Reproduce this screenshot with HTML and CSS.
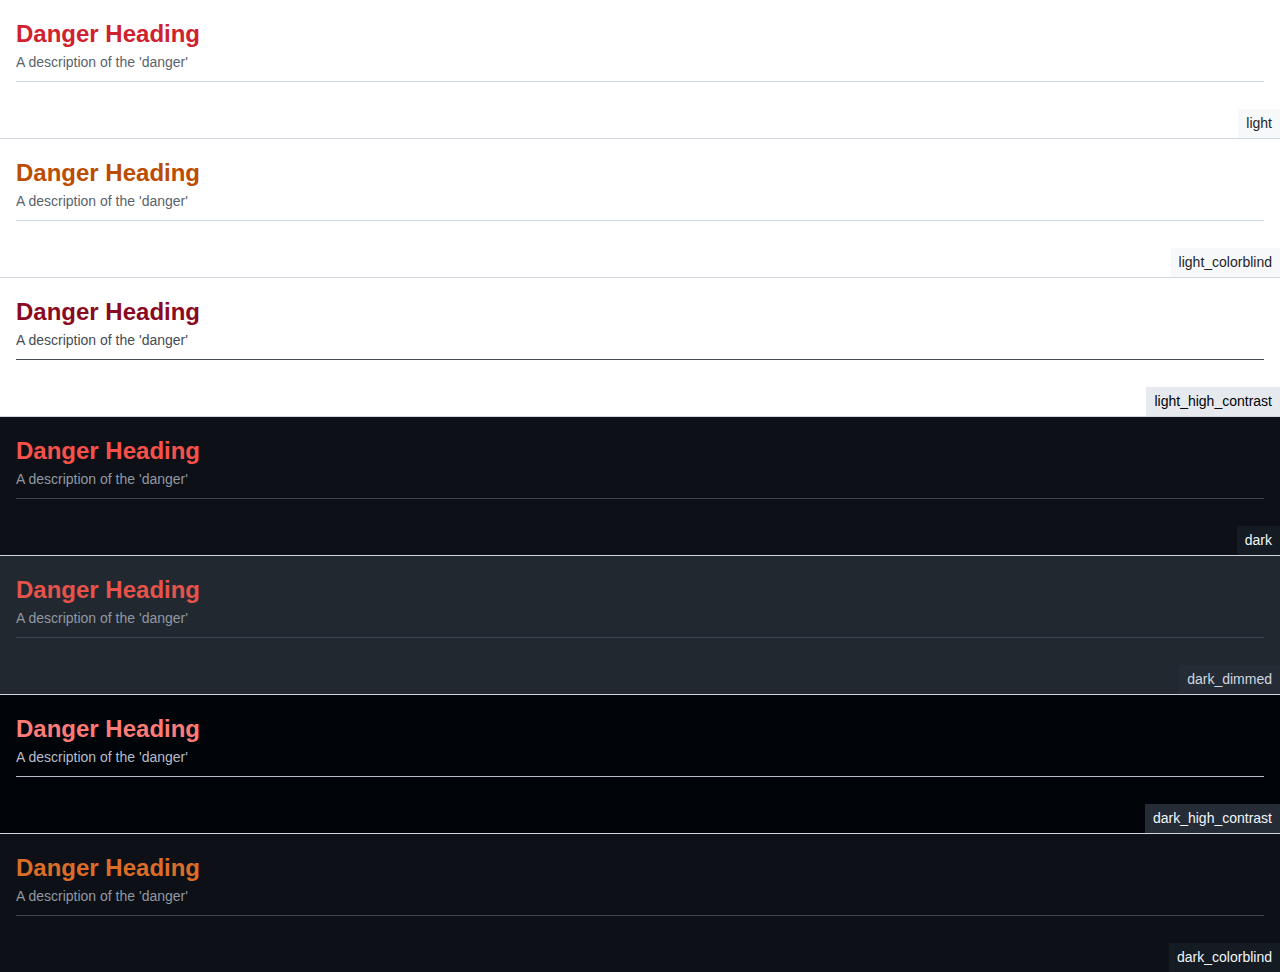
FILE: index.html
```html
<!DOCTYPE html>
<html lang="en">
<head>
<meta charset="utf-8">
<title>Subhead danger</title>
<link rel="stylesheet" href="styles.css">
</head>
<body>
<div class="theme t-light">
  <div class="subhead"><h2 class="subhead-heading">Danger Heading</h2><div class="subhead-desc">A description of the 'danger'</div></div>
  <span class="label">light</span>
</div>
<div class="theme t-light-cb">
  <div class="subhead"><h2 class="subhead-heading">Danger Heading</h2><div class="subhead-desc">A description of the 'danger'</div></div>
  <span class="label">light_colorblind</span>
</div>
<div class="theme t-light-hc">
  <div class="subhead"><h2 class="subhead-heading">Danger Heading</h2><div class="subhead-desc">A description of the 'danger'</div></div>
  <span class="label">light_high_contrast</span>
</div>
<div class="theme t-dark">
  <div class="subhead"><h2 class="subhead-heading">Danger Heading</h2><div class="subhead-desc">A description of the 'danger'</div></div>
  <span class="label">dark</span>
</div>
<div class="theme t-dark-dimmed">
  <div class="subhead"><h2 class="subhead-heading">Danger Heading</h2><div class="subhead-desc">A description of the 'danger'</div></div>
  <span class="label">dark_dimmed</span>
</div>
<div class="theme t-dark-hc">
  <div class="subhead"><h2 class="subhead-heading">Danger Heading</h2><div class="subhead-desc">A description of the 'danger'</div></div>
  <span class="label">dark_high_contrast</span>
</div>
<div class="theme t-dark-cb">
  <div class="subhead"><h2 class="subhead-heading">Danger Heading</h2><div class="subhead-desc">A description of the 'danger'</div></div>
  <span class="label">dark_colorblind</span>
</div>
</body>
</html>
```

FILE: styles.css
```css
* { box-sizing: border-box; }
html, body { margin: 0; padding: 0; }
body {
  font-family: "Liberation Sans", Arial, sans-serif;
  font-size: 14px;
  line-height: 1.5;
  background: #ffffff;
}
.theme {
  position: relative;
  height: 139px;
  padding: 16px 16px 0 16px;
  border-bottom: 1px solid #d0d7de;
  background: var(--bg);
}
.subhead {
  padding-bottom: 8px;
  border-bottom: 1px solid var(--divider);
}
.subhead-heading {
  margin: 0;
  font-size: 24px;
  line-height: 36px;
  font-weight: 700;
  color: var(--danger);
}
.subhead-desc {
  font-size: 14px;
  line-height: 21px;
  color: var(--muted);
}
.label {
  position: absolute;
  right: 0;
  bottom: 0;
  padding: 4px 8px;
  font-size: 14px;
  line-height: 21px;
  background: var(--label-bg);
  color: var(--label-fg);
}
.t-light {
  --bg: #ffffff; --danger: #cf222e; --muted: #59636e; --divider: #d1d9e0;
  --label-bg: #f6f8fa; --label-fg: #1f2328;
}
.t-light-cb {
  --bg: #ffffff; --danger: #bc4c00; --muted: #59636e; --divider: #d1d9e0;
  --label-bg: #f6f8fa; --label-fg: #1f2328;
}
.t-light-hc {
  --bg: #ffffff; --danger: #8a0a22; --muted: #454c54; --divider: #454c54;
  --label-bg: #e6eaef; --label-fg: #010409;
}
.t-dark {
  --bg: #0d1117; --danger: #f85149; --muted: #9198a1; --divider: #3d444d;
  --label-bg: #151b23; --label-fg: #f0f6fc;
}
.t-dark-dimmed {
  --bg: #212830; --danger: #e5534b; --muted: #9198a1; --divider: #3d444d;
  --label-bg: #262c36; --label-fg: #d1d7e0;
}
.t-dark-hc {
  --bg: #010409; --danger: #ff7b78; --muted: #b7bdc8; --divider: #b7bdc8;
  --label-bg: #262c36; --label-fg: #f0f6fc;
}
.t-dark-cb {
  --bg: #0d1117; --danger: #db6d28; --muted: #9198a1; --divider: #3d444d;
  --label-bg: #151b23; --label-fg: #f0f6fc;
}
```
